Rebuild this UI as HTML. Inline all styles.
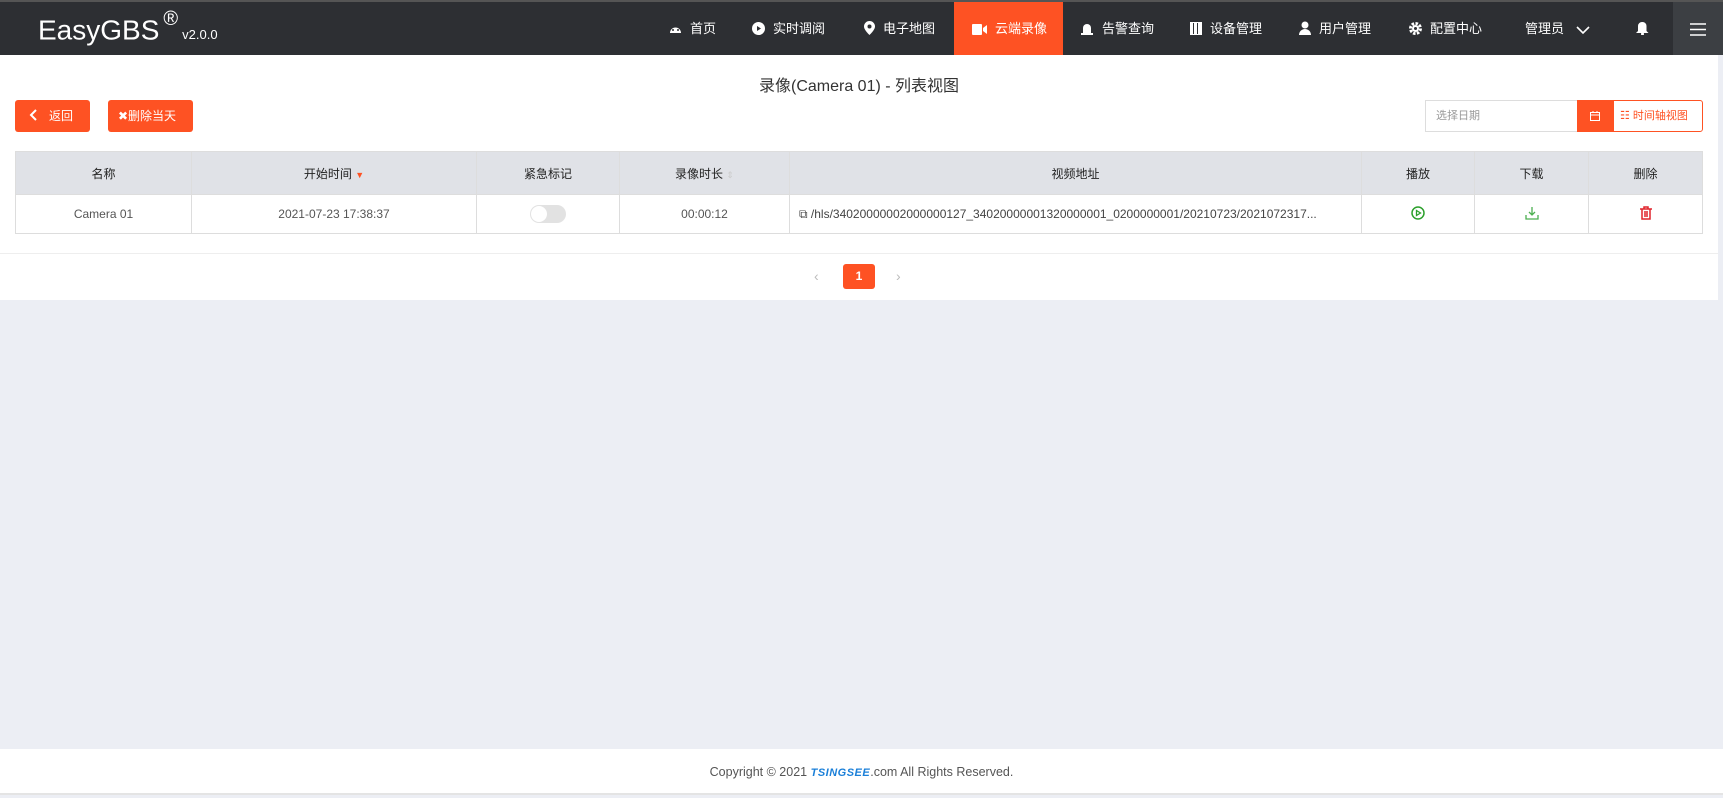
<!DOCTYPE html>
<html><head><meta charset="utf-8"><style>
*{margin:0;padding:0;box-sizing:border-box}
body{width:1723px;height:798px;overflow:hidden;background:#eceef4;font-family:"Liberation Sans","Noto Sans CJK SC",sans-serif;color:#333;position:relative}
.nav{position:absolute;left:0;top:0;width:1723px;height:55px;background:#2d2f33;border-top:2px solid #555}
.logo{position:absolute;left:38px;top:10px;color:#fff;font-size:28px}
.logo sup{font-size:20px;position:relative;top:-4px;margin-left:4px}
.logo small{font-size:13px;margin-left:4px}
.ni{position:absolute;top:0;height:53px;line-height:53px;color:#fff;font-size:13px;white-space:nowrap}
.ni svg{vertical-align:-2px;margin-right:8px}
.act{background:#fe5223}
.menu{position:absolute;left:1673px;top:0;width:50px;height:53px;background:#3c3f43}
.panel{position:absolute;left:0;top:55px;width:1718px;height:245px;background:#fff}
.title{position:absolute;top:72px;left:0;width:1718px;text-align:center;font-size:16px;color:#333}
.btn{position:absolute;top:100px;height:32px;background:#fe5223;color:#fff;border-radius:3px;font-size:12px;line-height:32px}
table{position:absolute;left:15px;top:151px;width:1688px;border-collapse:collapse;font-size:12px}
th,td{border:1px solid #ddd;text-align:center}
th{background:#e0e2e7;height:43px;font-weight:normal;color:#222}
td{height:39px;color:#555;background:#fff}
.sep{position:absolute;left:0;top:253px;width:1718px;height:1px;background:#eee}
.foot{position:absolute;left:0;top:749px;width:1723px;height:46px;background:#fff;border-bottom:2px solid #e4e4e4;text-align:center;line-height:46px;font-size:12.5px;color:#555}
</style></head><body>
<div class="nav">
<div class="logo">EasyGBS<sup>®</sup><small>v2.0.0</small></div>
<div class="ni" style="left:669px"><svg width="13" height="12" viewBox="0 0 13 12"><path d="M1 10A5.5 5.5 0 1 1 12 10Z" fill="#fff"/><circle cx="4" cy="7" r="1" fill="#2d2f33"/><circle cx="9" cy="7" r="1" fill="#2d2f33"/></svg>首页</div>
<div class="ni" style="left:752px"><svg width="13" height="13"><circle cx="6.5" cy="6.5" r="6.5" fill="#fff"/><path d="M5 4l4 2.5-4 2.5z" fill="#2d2f33"/></svg>实时调阅</div>
<div class="ni" style="left:864px"><svg width="11" height="14" viewBox="0 0 11 14"><path d="M5.5 0A5.5 5.5 0 0 1 11 5.5C11 9 5.5 14 5.5 14S0 9 0 5.5A5.5 5.5 0 0 1 5.5 0Z" fill="#fff"/><circle cx="5.5" cy="5.5" r="2" fill="#2d2f33"/></svg>电子地图</div>
<div class="ni act" style="left:954px;width:109px;padding-left:18px"><svg width="15" height="11"><rect width="10" height="11" rx="1" fill="#fff"/><path d="M11 4l4-3v9l-4-3z" fill="#fff"/></svg>云端录像</div>
<div class="ni" style="left:1080px"><svg width="14" height="14"><path d="M3 13V7a4 4 0 0 1 8 0v6z" fill="#fff"/><rect x="1" y="12" width="12" height="2" fill="#fff"/></svg>告警查询</div>
<div class="ni" style="left:1190px"><svg width="12" height="13"><rect width="12" height="13" fill="#fff"/><rect x="3" y="1" width="1" height="11" fill="#2d2f33"/><rect x="7" y="1" width="1" height="11" fill="#2d2f33"/></svg>设备管理</div>
<div class="ni" style="left:1299px"><svg width="12" height="14"><circle cx="6" cy="4" r="3.5" fill="#fff"/><path d="M0 14a6 6 0 0 1 12 0z" fill="#fff"/></svg>用户管理</div>
<div class="ni" style="left:1409px"><svg width="13" height="13"><circle cx="6.5" cy="6.5" r="5" fill="none" stroke="#fff" stroke-width="3" stroke-dasharray="2.5 1.4"/><circle cx="6.5" cy="6.5" r="3.5" fill="#fff"/><circle cx="6.5" cy="6.5" r="1.5" fill="#2d2f33"/></svg>配置中心</div>
<div class="ni" style="left:1525px">管理员 <svg width="14" height="9" style="margin-left:8px"><path d="M1 1l6 6 6-6" stroke="#fff" stroke-width="1.6" fill="none"/></svg></div>
<div class="ni" style="left:1636px"><svg width="13" height="14"><path d="M6.5 1a4 4 0 0 1 4 4v5l2 2H0l2-2V5a4 4 0 0 1 4.5-4z" fill="#fff"/><circle cx="6.5" cy="13" r="1.5" fill="#fff"/></svg></div>
<div class="menu"><svg width="16" height="13" style="position:absolute;left:17px;top:21px"><path d="M0 1h16M0 6.5h16M0 12h16" stroke="#fff" stroke-width="1.6"/></svg></div>
</div>
<div class="panel"></div>
<div class="title">录像(Camera 01) - 列表视图</div>
<div class="btn" style="left:15px;width:75px;padding-left:14px"><svg width="8" height="12" style="vertical-align:-1px;margin-right:12px"><path d="M7 1L2 6l5 5" stroke="#fff" stroke-width="2" fill="none"/></svg>返回</div>
<div class="btn" style="left:108px;width:85px;padding-left:10px">✖删除当天</div>
<div style="position:absolute;left:1425px;top:100px;width:152px;height:32px;border:1px solid #ddd;border-right:none;font-size:11px;color:#999;line-height:30px;padding-left:10px">选择日期</div>
<div style="position:absolute;left:1577px;top:100px;width:36px;height:32px;background:#fe5223"><svg width="10" height="10" style="position:absolute;left:13px;top:11px"><rect x=".5" y="1.5" width="9" height="8" fill="none" stroke="#fff"/><path d="M0 4h10M3 0v2M7 0v2" stroke="#fff"/></svg></div>
<div style="position:absolute;left:1613px;top:100px;width:90px;height:32px;border:1px solid #fe5223;border-radius:0 3px 3px 0;color:#fe5223;font-size:11px;line-height:30px;padding-left:6px">☷ 时间轴视图</div>
<table>
<tr><th style="width:176px">名称</th><th style="width:285px">开始时间 <span style="color:#fe5223;font-size:9px">▼</span></th><th style="width:143px">紧急标记</th><th style="width:170px">录像时长 <span style="color:#ccc;font-size:9px">⇕</span></th><th style="width:572px">视频地址</th><th style="width:113px">播放</th><th style="width:114px">下载</th><th>删除</th></tr>
<tr><td>Camera 01</td><td>2021-07-23 17:38:37</td><td><span style="display:inline-block;width:36px;height:18px;border-radius:9px;background:#e2e2e2;position:relative;vertical-align:middle"><span style="position:absolute;left:1px;top:1px;width:16px;height:16px;border-radius:8px;background:#fff"></span></span></td><td>00:00:12</td><td style="text-align:left;padding-left:9px;color:#444">⧉ /hls/34020000002000000127_34020000001320000001_0200000001/20210723/2021072317...</td>
<td><svg width="14" height="14"><circle cx="7" cy="7" r="6" fill="none" stroke="#2ca02c" stroke-width="1.5"/><path d="M5.5 4.5l4 2.5-4 2.5z" fill="none" stroke="#2ca02c" stroke-width="1.3"/></svg></td>
<td><svg width="14" height="14"><path d="M7 1v8M4 6l3 3 3-3M1 9v4h12V9" fill="none" stroke="#4caf50" stroke-width="1.3"/></svg></td>
<td><svg width="12" height="14"><path d="M0 3h12M4 3V1h4v2M2 3v10h8V3M5 5v6M7 5v6" fill="none" stroke="#e0242c" stroke-width="1.5"/></svg></td></tr>
</table>
<div class="sep"></div>
<div style="position:absolute;left:814px;top:268px;color:#bbb;font-size:14px">‹</div>
<div style="position:absolute;left:843px;top:264px;width:32px;height:25px;background:#fe5223;border-radius:3px;color:#fff;font-weight:bold;font-size:12px;text-align:center;line-height:25px">1</div>
<div style="position:absolute;left:896px;top:268px;color:#bbb;font-size:14px">›</div>
<div class="foot">Copyright © 2021 <b style="color:#1a7fd8;font-style:italic;font-size:11px;letter-spacing:.5px">TSINGSEE</b>.com All Rights Reserved.</div>
</body></html>
